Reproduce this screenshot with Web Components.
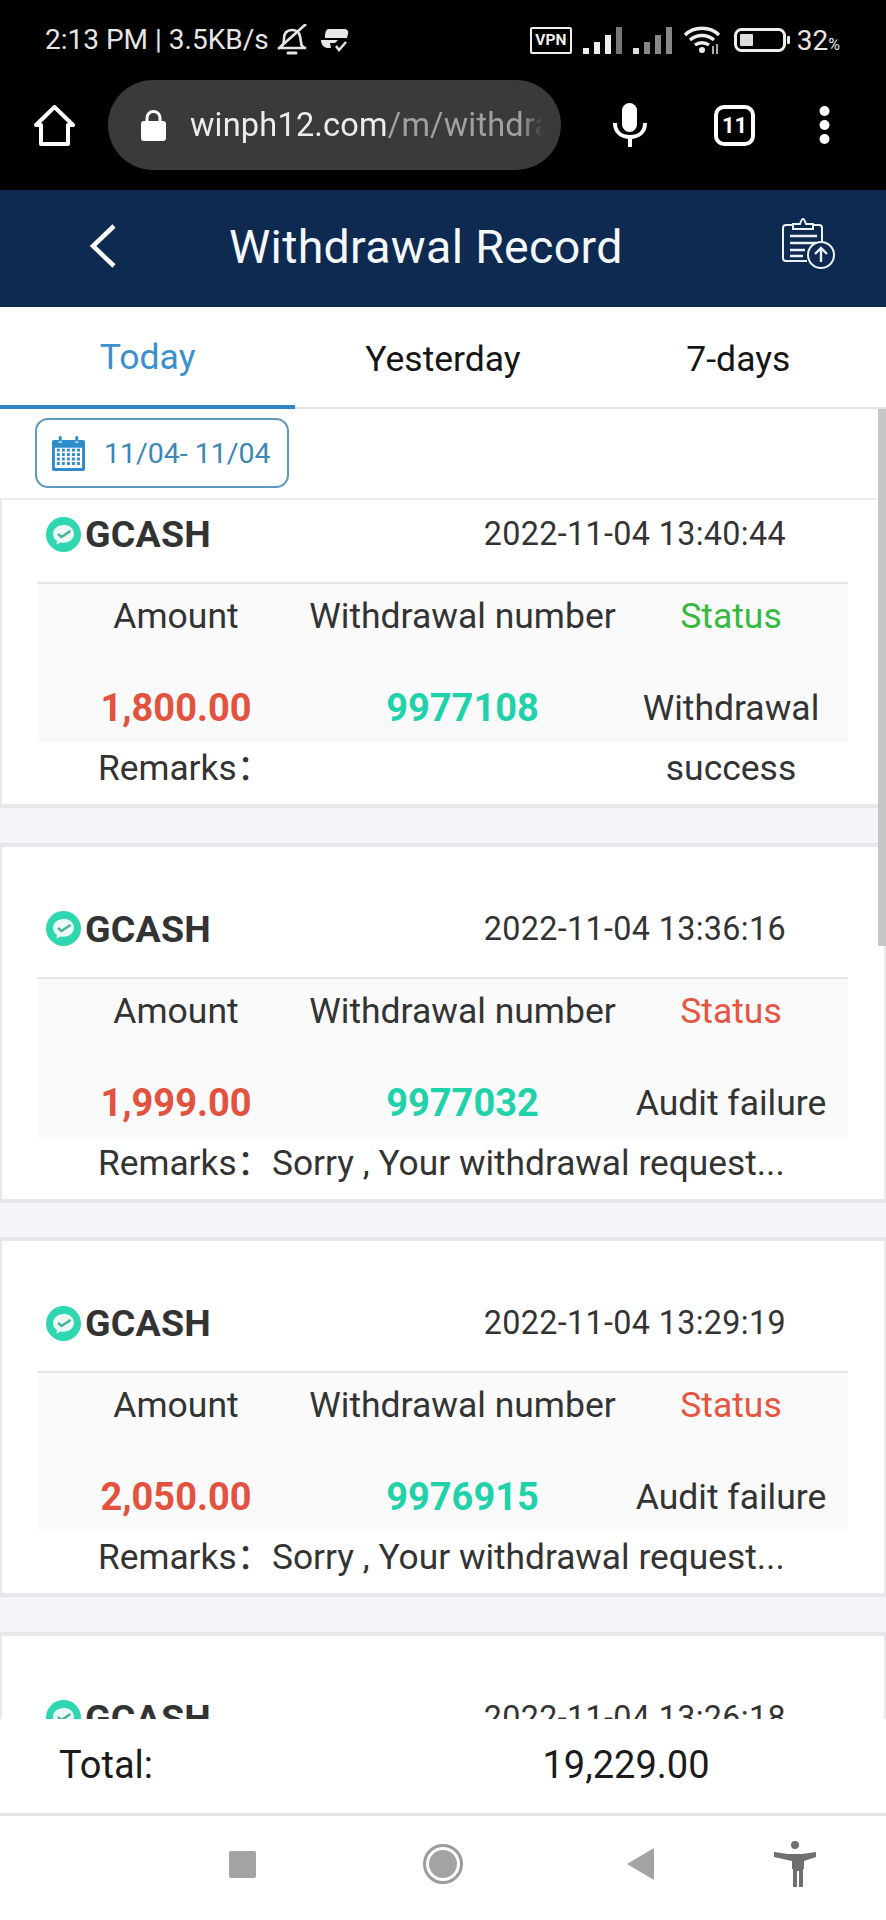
<!DOCTYPE html>
<html>
<head>
<meta charset="utf-8">
<title>Withdrawal Record</title>
<style>
  html, body { margin: 0; padding: 0; }
  body {
    width: 886px;
    height: 1920px;
    overflow: hidden;
    display: flex;
    flex-direction: column;
    font-family: Roboto, "Noto Sans CJK SC", sans-serif;
    background: #fff;
  }
</style>
</head>
<body>
<phone-chrome url-host="winph12.com" url-path="/m/withdra" tabs="11"></phone-chrome>
<page-header>Withdrawal Record</page-header>
<record-tabs></record-tabs>
<record-list>
  <date-filter slot="filter">11/04- 11/04</date-filter>
  <record-card time="2022-11-04 13:40:44" amount="1,800.00" number="9977108" state="ok" first>
    Withdrawal success
  </record-card>
  <record-card time="2022-11-04 13:36:16" amount="1,999.00" number="9977032" state="fail" remark="Sorry , Your withdrawal request...">
    Audit failure
  </record-card>
  <record-card time="2022-11-04 13:29:19" amount="2,050.00" number="9976915" state="fail" remark="Sorry , Your withdrawal request...">
    Audit failure
  </record-card>
  <record-card time="2022-11-04 13:26:18" amount="1,500.00" number="9976850" state="fail" remark="Sorry , Your withdrawal request...">
    Audit failure
  </record-card>
</record-list>
<total-bar value="19,229.00"></total-bar>
<nav-bar></nav-bar>

<script>
class PhoneChrome extends HTMLElement {
  connectedCallback() {
    const host = this.getAttribute("url-host");
    const path = this.getAttribute("url-path");
    const tabs = this.getAttribute("tabs");
    this.attachShadow({ mode: "open" }).innerHTML = `
      <style>
        :host { display: block; height: 190px; background: #000; color: #eaeaea; flex: none; }
        .status {
          height: 80px; box-sizing: border-box; padding: 0 46px 0 45px;
          display: flex; align-items: center; justify-content: space-between;
        }
        .side { display: flex; align-items: center; }
        .time { font-size: 28px; line-height: 80px; color: #e6e6e6; }
        .pct { font-size: 28px; margin-left: 7px; color: #e6e6e6; white-space: nowrap; }
        .pct small { font-size: 16px; }
        .vpn {
          box-sizing: border-box; width: 42px; height: 27px; border: 2px solid #eee; border-radius: 2px;
          font: 700 15.5px/23px Roboto, sans-serif; text-align: center; color: #eee; margin-right: 11px;
        }
        svg { display: block; flex: none; }
        .tools { height: 90px; display: flex; align-items: center; }
        .home { margin: 0 33px 0 34px; }
        .pill {
          width: 453px; height: 90px; border-radius: 45px; background: #3a3a3a;
          box-sizing: border-box; padding: 0 18px 0 33px;
          display: flex; align-items: center; flex: none;
        }
        .url {
          margin-left: 24px; width: 353px; overflow: hidden; white-space: nowrap;
          font-size: 32.5px; color: #ececec; letter-spacing: .2px;
          -webkit-mask-image: linear-gradient(90deg, #000 94%, transparent);
          mask-image: linear-gradient(90deg, #000 94%, transparent);
        }
        .url span { color: #a0a0a0; }
        .mic { margin-left: 52px; }
        .tab-count {
          box-sizing: border-box; width: 41px; height: 41px; margin-left: 67px;
          border: 4px solid #fff; border-radius: 10px; color: #fff;
          font: 700 22px/33px Roboto, sans-serif; text-align: center;
        }
        .dots { margin-left: 64px; }
      </style>
      <div class="status">
        <div class="side">
          <span class="time">2:13 PM | 3.5KB/s</span>
          <svg style="margin-left:8px" width="30" height="32" viewBox="0 0 30 32" fill="none" stroke="#e6e6e6" stroke-width="2.6">
            <path d="M3 24c3-2 4-4 4-9 0-6 3-9 8-9s7 2 8 6l1 6c0 3 1 5 4 6z" stroke-linejoin="round"/>
            <path d="M11 29h8" stroke-linecap="round" stroke-width="3"/>
            <path d="M1 25L29 0"/>
          </svg>
          <svg style="margin-left:14px" width="28" height="26" viewBox="0 0 28 26" fill="#e6e6e6">
            <path d="M8 2h15c3 0 5 2 4 5l-1 4H4C4 5 5 2 8 2zM0 13h17l-3 3H9l1 5H6c-4-1-6-4-6-8z"/>
            <path d="M15 19l3 4 7-8" fill="none" stroke="#e6e6e6" stroke-width="2.4"/>
          </svg>
        </div>
        <div class="side">
          <span class="vpn">VPN</span>
          <svg width="39" height="28" viewBox="0 0 39 28" fill="#eee"><rect x="0" y="22" width="6" height="6"/><rect x="11" y="16" width="6" height="12"/><rect x="22" y="9" width="6" height="19"/><rect x="33" y="1" width="6" height="27" fill="#777"/></svg>
          <svg style="margin-left:11px" width="39" height="28" viewBox="0 0 39 28" fill="#888"><rect x="0" y="22" width="6" height="6" fill="#ddd"/><rect x="11" y="16" width="6" height="12"/><rect x="22" y="9" width="6" height="19"/><rect x="33" y="1" width="6" height="27"/></svg>
          <svg style="margin-left:11px" width="40" height="30" viewBox="0 0 40 30" fill="none" stroke="#eee" stroke-width="3.4">
            <path d="M2 10C11 1 27 1 36 10M7 15c7-6 17-6 24 0M12 20c4-3 10-3 14 0"/>
            <circle cx="19" cy="25" r="3" fill="#eee" stroke="none"/>
            <path d="M30 21v8M34 19v10" stroke="#aaa" stroke-width="2"/>
          </svg>
          <svg style="margin-left:11px" width="56" height="24" viewBox="0 0 56 24">
            <rect x="1.5" y="1.5" width="49" height="21" rx="6" fill="none" stroke="#eee" stroke-width="3"/>
            <rect x="6" y="6" width="13" height="12" rx="1" fill="#ddd"/>
            <rect x="53" y="8" width="3" height="8" rx="1" fill="#eee"/>
          </svg>
          <span class="pct">32<small>%</small></span>
        </div>
      </div>
      <div class="tools">
        <svg class="home" width="41" height="41" viewBox="0 0 41 41" fill="none" stroke="#fff" stroke-width="4" stroke-linejoin="round">
          <path d="M2 20L20.500 2 39 20H34V39H7V20z"/>
        </svg>
        <div class="pill">
          <svg width="25" height="32" viewBox="0 0 25 32">
            <path d="M6 14V9a6.500 6.500 0 0 1 13 0v5" fill="none" stroke="#fff" stroke-width="3"/>
            <rect x="0" y="12" width="25" height="20" rx="3" fill="#fff"/>
          </svg>
          <div class="url">${host}<span>${path}</span></div>
        </div>
        <svg class="mic" width="34" height="46" viewBox="0 0 34 46" fill="none" stroke="#fff" stroke-width="4">
          <rect x="9" y="1" width="15" height="29" rx="7.500" fill="#fff" stroke="none"/>
          <path d="M2 21c0 9 6 14 15 14s15-5 15-14M17 35v10"/>
        </svg>
        <div class="tab-count">${tabs}</div>
        <svg class="dots" width="11" height="39" viewBox="0 0 11 39" fill="#fff">
          <circle cx="5.500" cy="5" r="5"/><circle cx="5.500" cy="19" r="5"/><circle cx="5.500" cy="33" r="5"/>
        </svg>
      </div>
    `;
  }
}

class PageHeader extends HTMLElement {
  connectedCallback() {
    this.attachShadow({ mode: "open" }).innerHTML = `
      <style>
        :host {
          display: flex; align-items: center; flex: none; height: 117px; box-sizing: border-box;
          background: #0e2a50; color: #f4f8fb; padding: 0 50px 6px 89px;
        }
        .title { font-size: 46.5px; margin: 2px 0 0 112px; flex: 1; letter-spacing: .3px; white-space: nowrap; }
        svg { display: block; flex: none; }
        .doc { margin-top: -4px; }
      </style>
      <svg width="28" height="44" viewBox="0 0 28 44" fill="none" stroke="#fff" stroke-width="4.500">
        <path d="M25 2L4 22l21 20"/>
      </svg>
      <span class="title"><slot></slot></span>
      <svg class="doc" width="54" height="54" viewBox="0 0 54 54" fill="none" stroke="#eaf2f8" stroke-width="2">
        <path d="M11 8H4a3 3 0 0 0-3 3v30a3 3 0 0 0 3 3h21M31 8h6a3 3 0 0 1 3 3v14"/>
        <path d="M11 12V7h7c1-3 2-5 3-5s2 2 3 5h7v5z"/>
        <path d="M8 19h27M8 26h26M8 33h15M8 39h13" stroke-width="2.400"/>
        <circle cx="39" cy="38" r="13" fill="#0e2a50"/>
        <path d="M39 45V31M33 37l6-6 6 6" stroke-width="2.400"/>
      </svg>
    `;
  }
}

class RecordTabs extends HTMLElement {
  connectedCallback() {
    const names = ["Today", "Yesterday", "7-days"];
    this.attachShadow({ mode: "open" }).innerHTML = `
      <style>
        :host {
          display: grid; grid-template-columns: repeat(3, 1fr); flex: none; height: 102px;
          background: #fff; border-bottom: 2px solid #e2e2e2; box-sizing: border-box;
        }
        div {
          display: flex; align-items: center; justify-content: center; padding-top: 2px;
          font-size: 35.5px; color: #151515; margin-bottom: -2px; box-sizing: border-box;
        }
        .on { color: #3a90cc; border-bottom: 4px solid #2f86c5; }
      </style>
      ${names.map((n, i) => `<div class="${i == 0 ? "on" : ""}">${n}</div>`).join("")}
    `;
  }
}

class DateFilter extends HTMLElement {
  connectedCallback() {
    let cells = "";
    for (let r = 0; r < 4; r++) {
      for (let c = 0; c < 5; c++) {
        cells += `<rect x="${5 + c * 5.2}" y="${13 + r * 4.6}" width="3" height="3"/>`;
      }
    }
    this.attachShadow({ mode: "open" }).innerHTML = `
      <style>
        :host {
          display: flex; align-items: center; width: 254px; height: 70px; box-sizing: border-box;
          margin-left: 35px; border: 2px solid #5c99bb; border-radius: 13px; padding-left: 15px;
          color: #3b87b5; font-size: 28.5px; background: #fff;
        }
        svg { display: block; flex: none; margin-right: 19px; }
      </style>
      <svg width="33" height="35" viewBox="0 0 34 36" fill="#2f8ccb">
        <path fill-rule="evenodd" d="M2 4h5v3h3V4h14v3h3V4h5a2 2 0 0 1 2 2v28a2 2 0 0 1-2 2H2a2 2 0 0 1-2-2V6a2 2 0 0 1 2-2zM3 12v21h28V12z"/>
        <rect x="7" y="0" width="3" height="6" rx="1.500"/><rect x="24" y="0" width="3" height="6" rx="1.500"/>
        ${cells}
      </svg>
      <span><slot></slot></span>
    `;
  }
}

class RecordList extends HTMLElement {
  connectedCallback() {
    this.attachShadow({ mode: "open" }).innerHTML = `
      <style>
        :host { display: flex; flex-direction: column; flex: none; height: 1310px; position: relative; overflow: hidden; background: #f4f5fb; }
        .filter { flex: none; height: 91px; box-sizing: border-box; padding-top: 9px; background: #fff; border-bottom: 2px solid #ededed; position: relative; z-index: 1; }
        .list { flex: 1; overflow: hidden; display: flex; flex-direction: column; gap: 34.500px; }
        .bar { position: absolute; top: 0; right: 0; width: 8px; height: 537px; background: #c6c6c6; z-index: 2; }
      </style>
      <div class="filter"><slot name="filter"></slot></div>
      <div class="list"><slot></slot></div>
      <div class="bar"></div>
    `;
  }
}

class RecordCard extends HTMLElement {
  connectedCallback() {
    const get = (n) => this.getAttribute(n) || "";
    const first = this.hasAttribute("first");
    const stateColor = get("state") == "ok" ? "#35b93f" : "#e5553f";
    this.attachShadow({ mode: "open" }).innerHTML = `
      <style>
        :host {
          display: block; flex: none; height: 360px; box-sizing: border-box; background: #fff;
          border: solid #e8e8ec; border-width: 4px 2px; color: #333;
          ${first ? "margin-top: -52px;" : ""}
        }
        .head {
          display: flex; align-items: center; height: 96px; margin-top: 34px;
          padding: 0 98px 0 44px;
        }
        .brand { font-size: 37.5px; font-weight: 700; margin-left: 4px; flex: 1; letter-spacing: .2px; }
        .time { font-size: 32.3px; letter-spacing: .35px; }
        svg { display: block; flex: none; }
        .table {
          margin: 0 36px 0 35px; background: #fafafa; border-top: 2px solid #e6e6e6; height: 160px;
          box-sizing: border-box; display: grid;
          grid-template-columns: 278px 295px 1fr; grid-template-rows: 65px 27px 66px;
          text-align: center; font-size: 35.5px;
        }
        .table > div { line-height: 65px; white-space: nowrap; display: flex; justify-content: center; }
        .gap { grid-column: 1 / -1; }
        .val { font-weight: 700; font-size: 38px; }
        .red { color: #e2523f; }
        .teal { color: #1fd2a9; }
        .state { color: ${stateColor}; padding-left: 4px; }
        .table > .txt { display: block; line-height: 60px; padding: 2px 15px 0 19px; white-space: normal; }
        .remark {
          font-size: 35.3px; line-height: 52px; margin-top: -3px; padding-left: 96px; white-space: nowrap;
        }
        .colon { font-family: "Noto Sans CJK SC", sans-serif; }
      </style>
      <div class="head">
        <svg width="35" height="35" viewBox="0 0 35 35">
          <circle cx="17.500" cy="17.500" r="17.500" fill="#2fd7b0"/>
          <path d="M17.500 8c-6 0-10.500 4-10.500 9 0 3 1.500 5 4 7l-.5 3.500 4-2c1 .2 2 .3 3 .3 6 0 10.500-4 10.500-9s-4.500-9-10.500-9z" fill="#eafbf6"/>
          <path d="M12 17l3.500 3 9-6" fill="none" stroke="#4cae97" stroke-width="2.400"/>
        </svg>
        <span class="brand">GCASH</span>
        <span class="time">${get("time")}</span>
      </div>
      <div class="table">
        <div>Amount</div>
        <div>Withdrawal number</div>
        <div class="state">Status</div>
        <div class="gap"></div>
        <div class="val red">${get("amount")}</div>
        <div class="val teal">${get("number")}</div>
        <div class="txt"><slot></slot></div>
      </div>
      <div class="remark">Remarks<span class="colon">：</span>${get("remark")}</div>
    `;
  }
}

class TotalBar extends HTMLElement {
  connectedCallback() {
    this.attachShadow({ mode: "open" }).innerHTML = `
      <style>
        :host {
          display: grid; grid-template-columns: 366px 1fr; align-items: center; flex: none;
          height: 97px; box-sizing: border-box; background: #fff; color: #1b1b1b;
          font-size: 38px; padding-bottom: 3px; border-bottom: 3px solid #e4e4e4;
        }
        .label { padding-left: 59px; }
        .value { text-align: center; }
      </style>
      <div class="label">Total:</div>
      <div class="value">${this.getAttribute("value")}</div>
    `;
  }
}

class NavBar extends HTMLElement {
  connectedCallback() {
    this.attachShadow({ mode: "open" }).innerHTML = `
      <style>
        :host {
          display: flex; align-items: center; flex: 1; background: #fff; padding: 0 0 8px 229px;
        }
        svg { display: block; flex: none; }
      </style>
      <svg width="27" height="27" viewBox="0 0 27 27"><rect width="27" height="27" rx="2" fill="#a3a3a3"/></svg>
      <svg style="margin-left:167px" width="40" height="40" viewBox="0 0 40 40">
        <circle cx="20" cy="20" r="18.500" fill="none" stroke="#9c9c9c" stroke-width="3"/>
        <circle cx="20" cy="20" r="14" fill="#a3a3a3"/>
      </svg>
      <svg style="margin-left:164px" width="27" height="32" viewBox="0 0 27 32"><path d="M27 0v32L0 16z" fill="#a3a3a3"/></svg>
      <svg style="margin-left:120px" width="42" height="46" viewBox="0 0 42 46" fill="#6f6f6f">
        <circle cx="21" cy="4" r="4"/>
        <path d="M0 11l14 2h14l14-2v5l-12 4v8l-1 0v18h-4V30h-2v16h-4V28l-1 0v-8L0 16z"/>
      </svg>
    `;
  }
}

customElements.define("phone-chrome", PhoneChrome);
customElements.define("page-header", PageHeader);
customElements.define("record-tabs", RecordTabs);
customElements.define("date-filter", DateFilter);
customElements.define("record-list", RecordList);
customElements.define("record-card", RecordCard);
customElements.define("total-bar", TotalBar);
customElements.define("nav-bar", NavBar);
</script>
</body>
</html>
